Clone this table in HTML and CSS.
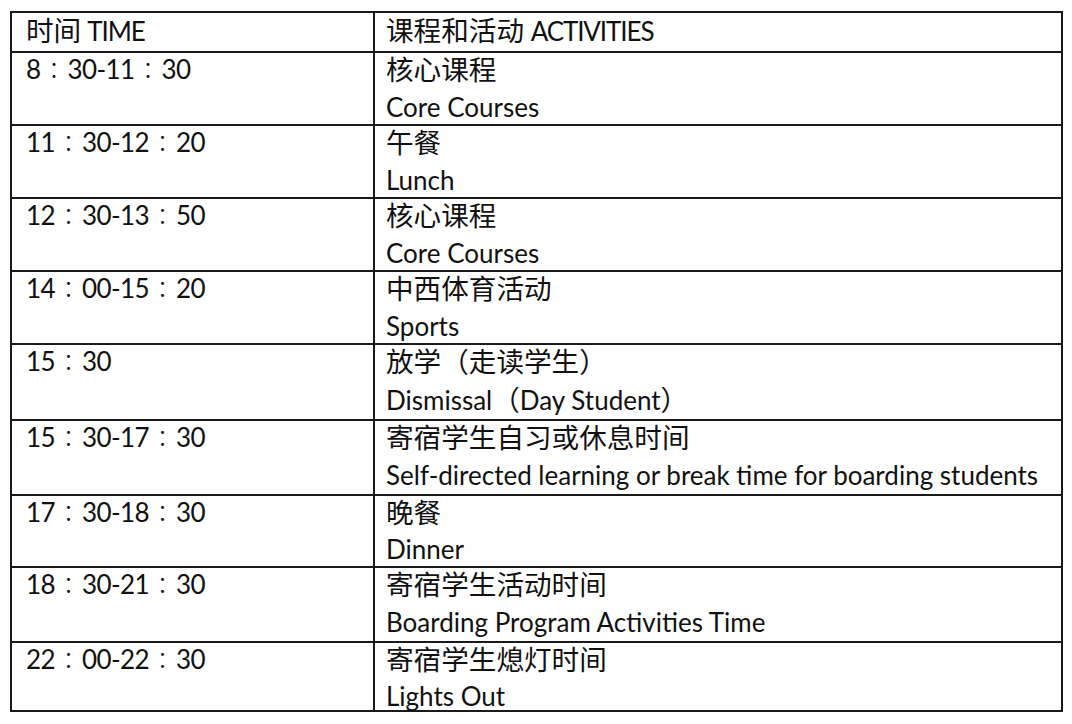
FILE: index.html
```html
<!DOCTYPE html>
<html lang="zh-CN">
<head>
<meta charset="utf-8">
<title>作息时间表</title>
<link rel="stylesheet" href="styles.css">
</head>
<body>
<table class="schedule">
  <tr class="head">
    <td class="time"><span class="zh">时间</span> <span class="caps">TIME</span></td>
    <td class="act"><span class="zh">课程和活动</span> <span class="caps">ACTIVITIES</span></td>
  </tr>
  <tr class="r73">
    <td class="time">8<span class="colon">：</span>30-11<span class="colon">：</span>30</td>
    <td class="act"><div class="cn"><span class="zh">核心课程</span></div><div class="en">Core Courses</div></td>
  </tr>
  <tr class="r73">
    <td class="time">11<span class="colon">：</span>30-12<span class="colon">：</span>20</td>
    <td class="act"><div class="cn"><span class="zh">午餐</span></div><div class="en">Lunch</div></td>
  </tr>
  <tr class="r73">
    <td class="time">12<span class="colon">：</span>30-13<span class="colon">：</span>50</td>
    <td class="act"><div class="cn"><span class="zh">核心课程</span></div><div class="en">Core Courses</div></td>
  </tr>
  <tr class="r73">
    <td class="time">14<span class="colon">：</span>00-15<span class="colon">：</span>20</td>
    <td class="act"><div class="cn"><span class="zh">中西体育活动</span></div><div class="en">Sports</div></td>
  </tr>
  <tr class="r76">
    <td class="time">15<span class="colon">：</span>30</td>
    <td class="act"><div class="cn"><span class="zh">放学（走读学生）</span></div><div class="en">Dismissal<span class="zh">（</span>Day Student<span class="zh">）</span></div></td>
  </tr>
  <tr class="r75">
    <td class="time">15<span class="colon">：</span>30-17<span class="colon">：</span>30</td>
    <td class="act"><div class="cn"><span class="zh">寄宿学生自习或休息时间</span></div><div class="en">Self-directed learning or break time for boarding students</div></td>
  </tr>
  <tr class="r72">
    <td class="time">17<span class="colon">：</span>30-18<span class="colon">：</span>30</td>
    <td class="act"><div class="cn"><span class="zh">晚餐</span></div><div class="en">Dinner</div></td>
  </tr>
  <tr class="r75">
    <td class="time">18<span class="colon">：</span>30-21<span class="colon">：</span>30</td>
    <td class="act"><div class="cn"><span class="zh">寄宿学生活动时间</span></div><div class="en">Boarding Program Activities Time</div></td>
  </tr>
  <tr class="r69 last">
    <td class="time">22<span class="colon">：</span>00-22<span class="colon">：</span>30</td>
    <td class="act"><div class="cn"><span class="zh">寄宿学生熄灯时间</span></div><div class="en">Lights Out</div></td>
  </tr>
</table>
</body>
</html>
```

FILE: styles.css
```css
html, body {
  margin: 0;
  padding: 0;
  background: #ffffff;
}

body {
  padding: 11px 0 0 10px;
  font-family: "Lato", "Noto Sans CJK SC", sans-serif;
  font-size: 26px;
  color: #111111;
}

.schedule {
  border-collapse: collapse;
  width: 1053px;
  table-layout: fixed;
  border: 2px solid #1a1a1a;
}

.schedule td {
  border: 2px solid #1a1a1a;
  vertical-align: top;
  padding: 0 0 0 14px;
  line-height: 33px;
  white-space: nowrap;
}

.schedule td.time {
  width: 347px;
  letter-spacing: -0.6px;
}

.schedule td.act {
  padding-left: 11px;
}

.zh {
  font-size: 27.6px;
  letter-spacing: 0;
}

.colon {
  font-family: "Lato", "Noto Sans CJK JP", "Noto Sans CJK SC", sans-serif;
  font-size: 23px;
  font-weight: 300;
  letter-spacing: 0;
  padding: 0 2px;
}

.caps {
  letter-spacing: -1.1px;
}

.cn {
  height: 33px;
}

.en {
  padding-top: 5px;
  height: 33px;
}

.head td {
  height: 37px;
  padding-top: 1px;
}

.r73 td { height: 71px; }
.r76 td { height: 74px; }
.r75 td { height: 73px; }
.r72 td { height: 70px; }
.r69 td { height: 67px; }

.r72 .en {
  padding-top: 4px;
}

.last .en {
  padding-top: 6px;
  height: 28px;
  line-height: 28px;
}
```
